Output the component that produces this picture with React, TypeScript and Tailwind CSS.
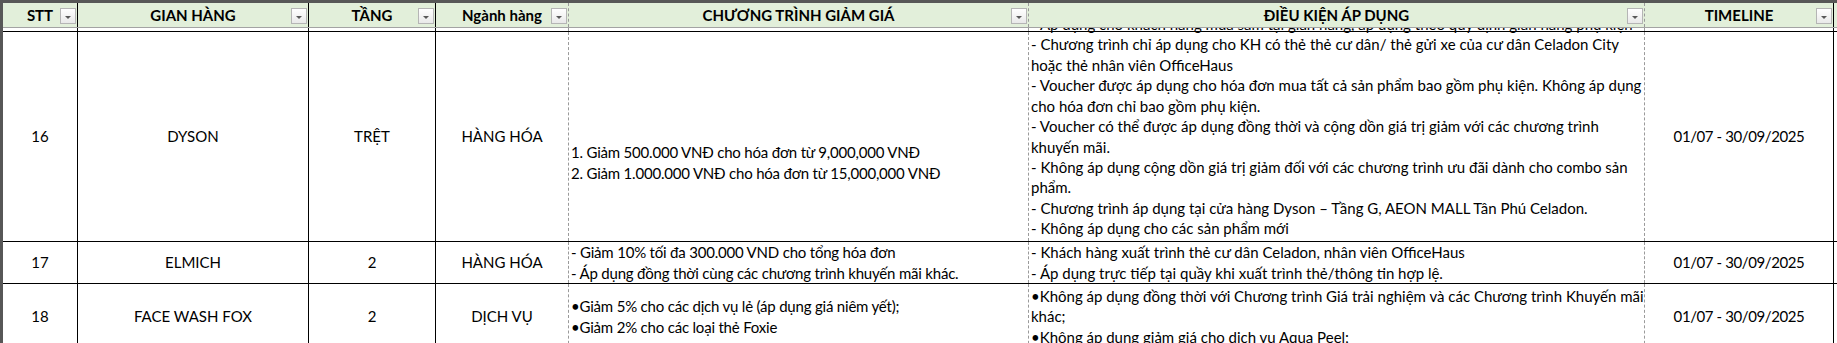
import type { ReactNode } from 'react';

type Col = { w: string; line: string; align: 'center' | 'left' };

const cols: Col[] = [
  { w: 'w-[75px]', line: 'border-r border-black', align: 'center' },
  { w: 'w-[231px]', line: 'border-r border-black', align: 'center' },
  { w: 'w-[127px]', line: 'border-r border-black', align: 'center' },
  { w: 'w-[133px]', line: 'border-r border-dashed border-[#9a9a9a]', align: 'center' },
  { w: 'w-[460px]', line: 'border-r border-dashed border-[#9a9a9a]', align: 'left' },
  { w: 'w-[616px]', line: 'border-r border-dashed border-[#9a9a9a]', align: 'left' },
  { w: 'w-[189px]', line: 'border-r border-black', align: 'center' },
];

const headers = ['STT', 'GIAN HÀNG', 'TẦNG', 'Ngành hàng', 'CHƯƠNG TRÌNH GIẢM GIÁ', 'ĐIỀU KIỆN ÁP DỤNG', 'TIMELINE'];

// first line of the Dyson terms, mostly hidden under the header
const hiddenLine = '- Áp dụng cho khách hàng mua sắm tại gian hàng, áp dụng theo quy định gian hàng phụ kiện';

interface RowData {
  height: string;
  stt: string;
  store: string;
  floor: string;
  kind: string;
  promo: string[];
  promoPad?: string;
  terms: string[];
  timeline: string;
}

const rows: RowData[] = [
  {
    height: 'h-[210px]',
    stt: '16',
    store: 'DYSON',
    floor: 'TRỆT',
    kind: 'HÀNG HÓA',
    promo: ['1. Giảm 500.000 VNĐ cho hóa đơn từ 9,000,000 VNĐ', '2. Giảm 1.000.000 VNĐ cho hóa đơn từ 15,000,000 VNĐ'],
    promoPad: 'pt-[52px]',
    terms: [
      hiddenLine,
      '- Chương trình chỉ áp dụng cho KH có thẻ thẻ cư dân/ thẻ gửi xe của cư dân Celadon City',
      'hoặc thẻ nhân viên OfficeHaus',
      '- Voucher được áp dụng cho hóa đơn mua tất cả sản phẩm bao gồm phụ kiện. Không áp dụng',
      'cho hóa đơn chỉ bao gồm phụ kiện.',
      '- Voucher có thể được áp dụng đồng thời và cộng dồn giá trị giảm với các chương trình',
      'khuyến mãi.',
      '- Không áp dụng cộng dồn giá trị giảm đối với các chương trình ưu đãi dành cho combo sản',
      'phẩm.',
      '- Chương trình áp dụng tại cửa hàng Dyson – Tầng G, AEON MALL Tân Phú Celadon.',
      '- Không áp dụng cho các sản phẩm mới',
      '\u00a0',
    ],
    timeline: '01/07 - 30/09/2025',
  },
  {
    height: 'h-[42px]',
    stt: '17',
    store: 'ELMICH',
    floor: '2',
    kind: 'HÀNG HÓA',
    promo: ['- Giảm 10% tối đa 300.000 VND cho tổng hóa đơn', '- Áp dụng đồng thời cùng các chương trình khuyến mãi khác.'],
    terms: ['- Khách hàng xuất trình thẻ cư dân Celadon, nhân viên OfficeHaus', '- Áp dụng trực tiếp tại quầy khi xuất trình thẻ/thông tin hợp lệ.'],
    timeline: '01/07 - 30/09/2025',
  },
  {
    height: 'h-[66px]',
    stt: '18',
    store: 'FACE WASH FOX',
    floor: '2',
    kind: 'DỊCH VỤ',
    promo: ['•Giảm 5% cho các dịch vụ lẻ (áp dụng giá niêm yết);', '•Giảm 2% cho các loại thẻ Foxie'],
    terms: ['•Không áp dụng đồng thời với Chương trình Giá trải nghiệm và các Chương trình Khuyến mãi', 'khác;', '•Không áp dụng giảm giá cho dịch vụ Aqua Peel;'],
    timeline: '01/07 - 30/09/2025',
  },
];

function FilterButton() {
  return (
    <span className="absolute right-px top-[5px] flex h-4 w-4 items-center justify-center border border-[#b5b5b5] bg-gradient-to-b from-white to-[#e9e9e9]">
      <span className="mt-[3px] h-0 w-0 border-x-[3px] border-t-[3px] border-x-transparent border-t-[#595959]" />
    </span>
  );
}

function Lines({ lines }: { lines: string[] }) {
  return (
    <>
      {lines.map((l, i) => (
        <div key={i} className="whitespace-nowrap">
          {l}
        </div>
      ))}
    </>
  );
}

function Cell({ col, children, className = '' }: { col: Col; children?: ReactNode; className?: string }) {
  return (
    <div
      className={`${col.w} ${col.line} flex shrink-0 flex-col justify-center overflow-hidden ${
        col.align === 'center' ? 'items-center text-center' : 'items-start pl-[2px]'
      } ${className}`}
    >
      {children}
    </div>
  );
}

export default function App() {
  return (
    <div className="h-[343px] w-[1837px] overflow-hidden border-l-[3px] border-t-[3px] border-[#575757] bg-white font-[Lato,'Liberation_Sans',sans-serif] text-[15px] leading-[20.4px] text-black">
      {/* Header */}
      <div className="flex h-[25px] border-b border-[#a3a3a3] bg-[#e2efda]">
        {cols.map((c, i) => (
          <div key={i} className={`${c.w} ${c.line} relative flex shrink-0 items-center justify-center font-bold`}>
            {headers[i]}
            <FilterButton />
          </div>
        ))}
      </div>

      {/* gap under header, the overflowing first line peeks through here */}
      <div className="flex h-[3px]">
        {cols.map((c, i) => (
          <div key={i} className={`${c.w} ${c.line} relative shrink-0 overflow-hidden`}>
            {i === 5 && (
              <div className="absolute left-[2px] top-[-14px] whitespace-nowrap">{hiddenLine}</div>
            )}
          </div>
        ))}
      </div>

      {rows.map((r) => (
        <div key={r.stt} className={`flex border-t border-black ${r.height}`}>
          <Cell col={cols[0]}>{r.stt}</Cell>
          <Cell col={cols[1]}>{r.store}</Cell>
          <Cell col={cols[2]}>{r.floor}</Cell>
          <Cell col={cols[3]}>{r.kind}</Cell>
          <Cell col={cols[4]} className={`tracking-[-0.2px] ${r.promoPad ?? ''}`}>
            <Lines lines={r.promo} />
          </Cell>
          <Cell col={cols[5]}>
            <Lines lines={r.terms} />
          </Cell>
          <Cell col={cols[6]} className="tracking-[-0.4px]">
            {r.timeline}
          </Cell>
        </div>
      ))}
    </div>
  );
}
